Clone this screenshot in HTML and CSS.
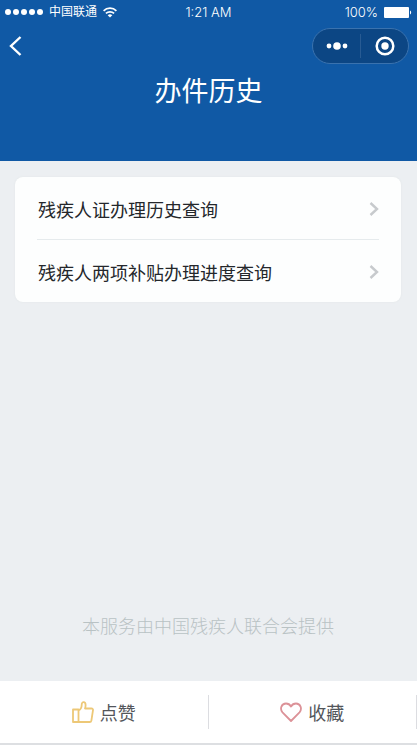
FILE: index.html
```html
<!DOCTYPE html>
<html lang="zh-CN">
<head>
<meta charset="utf-8">
<meta name="viewport" content="width=device-width, initial-scale=1">
<title>办件历史</title>
<link rel="stylesheet" href="styles.css">
</head>
<body>
<header class="header">
  <div class="status">
    <div class="status-side">
      <svg width="38" height="8" viewBox="0 0 38 8" fill="currentColor" aria-hidden="true"><circle cx="3" cy="4" r="3"/><circle cx="11" cy="4" r="3"/><circle cx="19" cy="4" r="3"/><circle cx="27" cy="4" r="3"/><circle cx="35" cy="4" r="3"/></svg>
      <span>中国联通</span>
      <svg width="14" height="11" viewBox="0 0 14 11" fill="none" stroke="currentColor" stroke-width="1.7" aria-hidden="true"><path d="M.6 3.8a9.2 9.2 0 0 1 12.8 0M2.9 6.4a6 6 0 0 1 8.2 0"/><path d="M7 10.4 4.7 8.2a3.5 3.5 0 0 1 4.6 0z" fill="currentColor" stroke="none"/></svg>
    </div>
    <span class="time">1:21 AM</span>
    <div class="status-side status-right">
      <span>100%</span>
      <svg width="28" height="11" viewBox="0 0 28 11" fill="currentColor" aria-hidden="true"><rect x="0" y="0" width="25" height="11" rx="1"/><path d="M26 3.5c1.6.5 1.6 3.5 0 4z"/></svg>
    </div>
  </div>
  <nav class="nav">
    <button type="button" aria-label="返回">
      <svg width="14" height="22" viewBox="0 0 14 22" fill="none" stroke="currentColor" stroke-width="2.4"><path d="M12.5 2 3 11l9.5 9"/></svg>
    </button>
    <div class="capsule">
      <button class="capsule-button" type="button" aria-label="更多">
        <svg width="22" height="8" viewBox="0 0 22 8" fill="currentColor"><circle cx="3" cy="4" r="2.4"/><circle cx="11" cy="4" r="3.8"/><circle cx="19" cy="4" r="2.4"/></svg>
      </button>
      <button class="capsule-button" type="button" aria-label="关闭">
        <svg width="20" height="20" viewBox="0 0 20 20"><circle cx="10" cy="10" r="8.3" fill="none" stroke="currentColor" stroke-width="2.5"/><circle cx="10" cy="10" r="3.7" fill="currentColor"/></svg>
      </button>
    </div>
  </nav>
  <h1 class="title">办件历史</h1>
</header>
<main class="main">
  <ul class="card">
    <li class="item"><a class="row" href="#certificate">残疾人证办理历史查询
      <svg width="10" height="16" viewBox="0 0 10 16" fill="none" stroke="currentColor" stroke-width="2.4" aria-hidden="true"><path d="m1.5 2 6.5 6-6.5 6"/></svg></a></li>
    <li class="item"><a class="row" href="#subsidy">残疾人两项补贴办理进度查询
      <svg width="10" height="16" viewBox="0 0 10 16" fill="none" stroke="currentColor" stroke-width="2.4" aria-hidden="true"><path d="m1.5 2 6.5 6-6.5 6"/></svg></a></li>
  </ul>
  <p class="provider">本服务由中国残疾人联合会提供</p>
</main>
<footer class="actions">
  <button class="action" type="button">
    <svg class="like" width="22" height="22" viewBox="0 0 22 22" fill="none" stroke="currentColor" stroke-width="1.8" stroke-linejoin="round"><path d="M1 8.5h5.500V21H1zM6.500 9.500c2.200-1 3.200-3.300 3.200-5.800C9.700.2 13.600.3 13.600 4c0 1.300-.2 2.500-.6 3.500h6.500c1.100 0 1.700.7 1.500 1.700l-1.600 10.300c-.2.900-.8 1.500-1.700 1.500H6.500z"/></svg>
    点赞
  </button>
  <button class="action" type="button">
    <svg class="favorite" width="22" height="20" viewBox="0 0 22 20" fill="none" stroke="currentColor" stroke-width="1.8" stroke-linejoin="round"><path d="M11 19 2.5 10.3C-.5 6.8 1.500 1.500 6 1.500c2.200 0 4 1.200 5 3 1-1.800 2.800-3 5-3 4.500 0 6.500 5.300 3.500 8.800z"/></svg>
    收藏
  </button>
</footer>
</body>
</html>
```
FILE: styles.css
```css
* {
  box-sizing: border-box;
}

body {
  display: flex;
  flex-direction: column;
  min-height: 100vh;
  margin: 0;
  background: #eceff2;
  color: #24272b;
  font-family: "Noto Sans CJK SC", sans-serif;
  font-size: 18px;
  line-height: 24px;
}

button {
  padding: 0;
  border: 0;
  background: none;
  color: inherit;
  font: inherit;
}

svg {
  display: block;
  flex: none;
}

.header {
  padding-bottom: 55px;
  background: #1059a5;
  color: #fff;
}

.status {
  display: grid;
  grid-template-columns: 1fr auto 1fr;
  align-items: center;
  height: 24px;
  padding: 0 5px;
  font-family: Inter, "Noto Sans CJK SC", sans-serif;
  font-size: 12px;
}

.status-side {
  display: flex;
  align-items: center;
  gap: 6px;
  height: 22px;
}

.status-right {
  justify-content: flex-end;
}

.time,
.status-right {
  font-size: 13px;
  font-weight: 300;
}

.nav {
  display: flex;
  align-items: center;
  justify-content: space-between;
  height: 44px;
  padding: 0 8px;
}

.capsule {
  display: flex;
  align-items: center;
  width: 97px;
  height: 36px;
  border: 1px solid #3a72ae;
  border-radius: 18px;
  background: #0c4684;
}

.capsule-button {
  display: grid;
  flex: 1;
  place-items: center;
  height: 24px;
}

.capsule-button + .capsule-button {
  border-left: 1px solid #285b93;
}

.title {
  margin: 6px 0 0;
  font-size: 27px;
  font-weight: 400;
  line-height: 32px;
  text-align: center;
}

.main {
  display: flex;
  flex: 1;
  flex-direction: column;
  justify-content: space-between;
  padding: 16px 16px 44px 15px;
}

.card {
  margin: 0;
  padding: 0 22px;
  border-radius: 8px;
  background: #fdfefe;
  box-shadow: 0 0 2px #dfe4e6;
  list-style: none;
}

.item + .item {
  border-top: 1px solid #e6ebed;
}

.row {
  display: flex;
  align-items: center;
  justify-content: space-between;
  height: 62px;
  padding: 2px 0 0 1px;
  color: inherit;
  text-decoration: none;
}

.row svg {
  color: #c7cacd;
}

.provider {
  margin: 0;
  color: #b9c2c4;
  font-weight: 300;
  text-align: center;
}

.actions {
  display: flex;
  align-items: center;
  height: 64px;
  border-bottom: 2px solid #dddfe2;
  background: #fff;
}

.action {
  display: flex;
  flex: 1;
  align-items: center;
  justify-content: center;
  gap: 6px;
  height: 34px;
  border-right: 1px solid #dcdde1;
  color: #53565b;
}

.like {
  color: #edc877;
}

.favorite {
  color: #dc9298;
}
```
